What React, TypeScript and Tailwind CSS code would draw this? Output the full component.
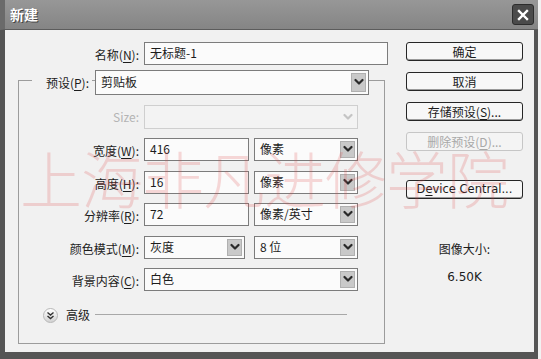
import React from "react";

const F = "font-['Noto_Sans_CJK_SC','Noto_Sans',sans-serif]";

function Lbl({ pre, k, className = "" }: { pre: string; k: string; className?: string }) {
  return (
    <span className={`text-[12px] text-[#1c1c1c] whitespace-nowrap ${className}`}>
      {pre}(<span className="underline underline-offset-2">{k}</span>):
    </span>
  );
}

function Chevron({ light = false }: { light?: boolean }) {
  return (
    <svg width="10" height="8" viewBox="0 0 10 8">
      <polyline
        points="1.5,2 5,5.5 8.5,2"
        fill="none"
        stroke={light ? "#c4c4c4" : "#2a2a2a"}
        strokeWidth="2.2"
        strokeLinecap="round"
        strokeLinejoin="round"
      />
    </svg>
  );
}

function Select({
  w,
  h = "h-[23px]",
  value,
  disabled = false,
}: {
  w: string;
  h?: string;
  value?: string;
  disabled?: boolean;
}) {
  return (
    <div
      className={`${w} ${h} flex items-center border ${
        disabled ? "border-[#cfcfcf] bg-[#f3f3f3]" : "border-[#7c7c7c] bg-[#fbfbfb]"
      }`}
    >
      <span className="pl-[5px] text-[12px] text-[#1c1c1c] whitespace-nowrap">{value}</span>
      <div
        className={`ml-auto mr-[2px] w-[15px] self-stretch my-[2px] flex items-center justify-center ${
          disabled ? "" : "bg-[#c9c9c9] border border-[#b0b0b0]"
        }`}
      >
        <Chevron light={disabled} />
      </div>
    </div>
  );
}

function Input({ w, value }: { w: string; value: string }) {
  return (
    <div className={`${w} h-[23px] flex items-center border border-[#7c7c7c] bg-[#fbfbfb] pl-[5px] text-[12px] text-[#1c1c1c]`}>
      {value}
    </div>
  );
}

function Btn({ children, disabled = false, mt }: { children: React.ReactNode; disabled?: boolean; mt: string }) {
  return (
    <div
      className={`${mt} w-[117px] h-[19px] rounded-[3px] flex items-center justify-center text-[12px] ${
        disabled
          ? "border border-[#c6c6c6] text-[#a8a8a8] bg-[#f4f4f4]"
          : "border-[1.5px] border-[#262626] text-[#1c1c1c] bg-[#f7f7f7] shadow-[inset_0_-1px_0_#9a9a9a]"
      }`}
    >
      {children}
    </div>
  );
}

export default function App() {
  return (
    <div className={`relative w-[541px] h-[359px] bg-[#f2f2f2] overflow-hidden ${F}`}>
      <div className="w-[538px] h-[359px] flex flex-col">
        {/* title bar */}
        <div className="h-[30px] shrink-0 flex items-center border-l-[5px] border-[#6a6a6a] border-b border-b-[#5c5c5c] bg-[linear-gradient(#979797,#858585)]">
          <span className="ml-[5px] text-[14px] font-bold text-white [text-shadow:1px_1px_0_#444]">新建</span>
          <div className="ml-auto mr-[4px] w-[22px] h-[21px] rounded-[3px] bg-[#4a4a4a] border border-[#2c2c2c] flex items-center justify-center">
            <svg width="12" height="12" viewBox="0 0 12 12">
              <path d="M2 2 L10 10 M10 2 L2 10" stroke="#ffffff" strokeWidth="2.4" strokeLinecap="square" />
            </svg>
          </div>
        </div>

        {/* body */}
        <div className="flex-1 flex border-l-[5px] border-r-[4px] border-b-[7px] border-[#555555] bg-[#f1f1f1]">
          {/* form column */}
          <div className="w-[385px] flex flex-col">
            <div className="mt-[11px] flex items-center">
              <div className="w-[134px] text-right">
                <Lbl pre="名称" k="N" />
              </div>
              <div className="ml-[5px]">
                <Input w="w-[244px]" value="无标题-1" />
              </div>
            </div>

            {/* group box */}
            <div className="ml-[13px] mt-[15px] w-[367px] h-[264px] border border-[#9c9c9c] flex flex-col">
              <div className="-mt-[12px] flex items-center">
                <div className="ml-[13px] w-[60px] pr-[3px] text-right bg-[#f1f1f1] leading-[25px]">
                  <Lbl pre="预设" k="P" />
                </div>
                <div className="ml-[3px]">
                  <Select w="w-[274px]" h="h-[25px]" value="剪贴板" />
                </div>
              </div>

              <div className="mt-[10px] flex items-center">
                <div className="w-[120px] text-right text-[12px] text-[#b4b4b4]">Size:</div>
                <div className="ml-[5px]">
                  <Select w="w-[214px]" h="h-[24px]" disabled />
                </div>
              </div>

              <div className="mt-[8px] flex items-center">
                <div className="w-[120px] text-right">
                  <Lbl pre="宽度" k="W" />
                </div>
                <div className="ml-[5px] flex gap-[5px]">
                  <Input w="w-[105px]" value="416" />
                  <Select w="w-[104px]" value="像素" />
                </div>
              </div>

              <div className="mt-[9px] flex items-center">
                <div className="w-[120px] text-right">
                  <Lbl pre="高度" k="H" />
                </div>
                <div className="ml-[5px] flex gap-[5px]">
                  <Input w="w-[105px]" value="16" />
                  <Select w="w-[104px]" value="像素" />
                </div>
              </div>

              <div className="mt-[8px] flex items-center">
                <div className="w-[120px] text-right">
                  <Lbl pre="分辨率" k="R" />
                </div>
                <div className="ml-[5px] flex gap-[5px]">
                  <Input w="w-[105px]" value="72" />
                  <Select w="w-[104px]" value="像素/英寸" />
                </div>
              </div>

              <div className="mt-[9px] flex items-center">
                <div className="w-[120px] text-right">
                  <Lbl pre="颜色模式" k="M" />
                </div>
                <div className="ml-[5px] flex gap-[9px]">
                  <Select w="w-[101px]" value="灰度" />
                  <Select w="w-[104px]" value="8 位" />
                </div>
              </div>

              <div className="mt-[8px] flex items-center">
                <div className="w-[120px] text-right">
                  <Lbl pre="背景内容" k="C" />
                </div>
                <div className="ml-[5px]">
                  <Select w="w-[214px]" value="白色" />
                </div>
              </div>

              <div className="mt-[16px] h-[16px] flex items-center">
                <div className="ml-[24px] w-[15px] h-[15px] rounded-full bg-[linear-gradient(#ffffff,#d2d2d2)] border border-[#b8b8b8] flex items-center justify-center">
                  <svg width="9" height="9" viewBox="0 0 9 9">
                    <polyline points="1.5,1.5 4.5,4 7.5,1.5" fill="none" stroke="#333" strokeWidth="1.4" />
                    <polyline points="1.5,5 4.5,7.5 7.5,5" fill="none" stroke="#333" strokeWidth="1.4" />
                  </svg>
                </div>
                <span className="ml-[8px] text-[12px] text-[#1c1c1c]">高级</span>
                <div className="ml-[5px] w-[252px] h-px bg-[#a8a8a8] -mt-[2px]" />
              </div>
            </div>
          </div>

          {/* button column */}
          <div className="flex flex-col pl-[16px]">
            <Btn mt="mt-[12px]">确定</Btn>
            <Btn mt="mt-[11px]">取消</Btn>
            <Btn mt="mt-[11px]">
              <span>
                存储预设(<span className="underline underline-offset-2">S</span>)...
              </span>
            </Btn>
            <Btn mt="mt-[11px]" disabled>
              <span>
                删除预设(<span className="underline underline-offset-2">D</span>)...
              </span>
            </Btn>
            <Btn mt="mt-[29px]">
              <span className="font-['DejaVu_Sans',sans-serif] text-[11.5px]">
                D<span className="underline underline-offset-2">e</span>vice Central...
              </span>
            </Btn>
            <div className="w-[117px] mt-[42px] text-center text-[12px] text-[#1c1c1c] leading-[16px]">图像大小:</div>
            <div className="w-[117px] mt-[12px] text-center text-[12px] text-[#1c1c1c] font-['DejaVu_Sans',sans-serif] leading-[16px]">
              6.50K
            </div>
          </div>
        </div>
      </div>

      {/* watermark */}
      <div className="absolute left-[20px] top-[146px] pointer-events-none select-none text-[62px] font-light tracking-[-1px] text-[#e04848] opacity-20 whitespace-nowrap leading-none">
        上海非凡进修学院
      </div>
    </div>
  );
}
